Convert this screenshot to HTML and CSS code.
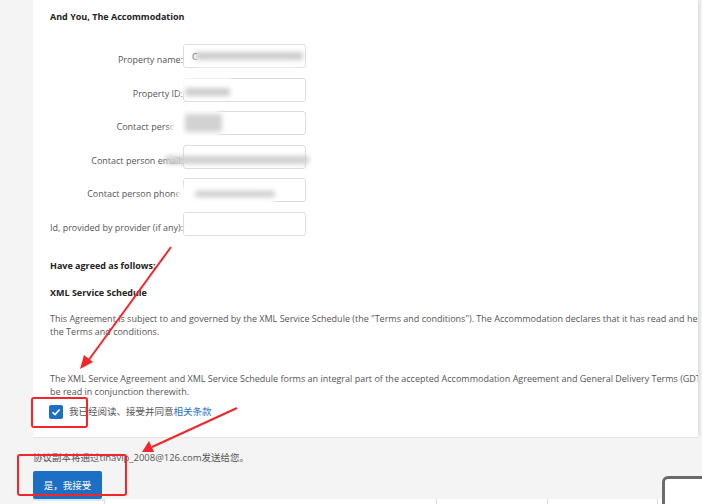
FILE: index.html
```html
<!DOCTYPE html>
<html lang="zh-CN">
<head>
    <meta charset="UTF-8">
    <meta name="viewport" content="width=device-width, initial-scale=1.0">
    <title>XML Service Agreement</title>
    <link rel="stylesheet" href="styles.css">
</head>
<body>
    <div class="page">
        <div class="card">
            <h3 class="title">And You, The Accommodation</h3>

            <div class="form">
                <div class="form-row">
                    <label for="prop_name">Property name:</label>
                    <div class="field">
                        <input type="text" id="prop_name" value="C">
                        <span class="mask m1"></span>
                    </div>
                </div>
                <div class="form-row">
                    <label for="prop_id">Property ID:</label>
                    <div class="field">
                        <input type="text" id="prop_id">
                        <span class="mask m2"></span>
                    </div>
                </div>
                <div class="form-row">
                    <label for="contact">Contact person:</label>
                    <div class="field">
                        <input type="text" id="contact">
                        <span class="mask m3"></span>
                    </div>
                </div>
                <div class="form-row">
                    <label for="contact_email">Contact person email:</label>
                    <div class="field">
                        <input type="text" id="contact_email">
                        <span class="mask m4"></span>
                    </div>
                </div>
                <div class="form-row">
                    <label for="contact_phone">Contact person phone:</label>
                    <div class="field">
                        <input type="text" id="contact_phone">
                        <span class="mask m5"></span>
                    </div>
                </div>
                <div class="form-row">
                    <label for="provider_id">Id, provided by provider (if any):</label>
                    <div class="field">
                        <input type="text" id="provider_id">
                    </div>
                </div>
            </div>

            <h3 class="sub agreed">Have agreed as follows:</h3>
            <h3 class="sub schedule">XML Service Schedule</h3>

            <p class="terms first">This Agreement is subject to and governed by the XML Service Schedule (the "Terms and conditions"). The Accommodation declares that it has read and hereby accepts<br>the Terms and conditions.</p>

            <p class="terms second">The XML Service Agreement and XML Service Schedule forms an integral part of the accepted Accommodation Agreement and General Delivery Terms (GDT") and shall<br>be read in conjunction therewith.</p>

            <label class="agree">
                <span class="checkbox">
                    <svg width="14" height="14" viewBox="0 0 14 14"><polyline points="3.5,7.2 6,9.6 10.6,4.4" fill="none" stroke="#fff" stroke-width="1.5"/></svg>
                </span>
                <span>我已经阅读、接受并同意<a href="#" class="link">相关条款</a></span>
            </label>
        </div>

        <p class="notice">协议副本将通过tinavip_2008@126.com发送给您。</p>
        <button class="accept">是，我接受</button>

        <div class="strip">
            <span class="cell c1"></span>
            <span class="cell c2"></span>
            <span class="cell c3"></span>
            <span class="cell c4"></span>
            <span class="cell c5"></span>
        </div>
    </div>

    <div class="widget"></div>

    <!-- red marks drawn over the screenshot -->
    <svg class="marks" width="702" height="504" viewBox="0 0 702 504">
        <line x1="171" y1="247" x2="88" y2="361" stroke="#f2262b" stroke-width="2"/>
        <polygon points="80,369 84,355 93,362" fill="#f2262b"/>
        <rect x="32" y="398" width="55" height="29" rx="2" fill="none" stroke="#f2262b" stroke-width="2"/>
        <line x1="237" y1="408" x2="152" y2="447" stroke="#f2262b" stroke-width="2"/>
        <polygon points="142,452 149,441 154,452" fill="#f2262b"/>
        <rect x="18" y="455" width="108" height="40" rx="2" fill="none" stroke="#f2262b" stroke-width="2"/>
    </svg>
</body>
</html>
```

FILE: styles.css
```css
body {
    margin: 0;
    width: 702px;
    height: 504px;
    overflow: hidden;
    background: #f4f4f4;
    font-family: "Open Sans", "Noto Sans CJK SC", sans-serif;
    font-size: 9px;
    color: #555;
    position: relative;
}
.page {
    padding-left: 33px;
}
.card {
    width: 648px;
    padding: 10px 0 18px 17px;
    background: #fff;
    overflow: hidden;
    box-shadow: 3px 0 3px -1px #ddd, 0 1px 0 #e6e6e6;
}
.title, .sub {
    margin: 0;
    font-size: 9px;
    line-height: 13px;
    font-weight: 700;
    color: #222;
}
.form {
    margin-top: 21px;
    display: flex;
    flex-direction: column;
    gap: 9.6px;
}
.form-row {
    display: flex;
}
.form-row label {
    width: 133px;
    text-align: right;
    align-self: flex-end;
    line-height: 13px;
    padding-bottom: 2px;
    white-space: nowrap;
}
.field {
    position: relative;
}
.field input {
    display: block;
    box-sizing: border-box;
    width: 123px;
    height: 24px;
    margin: 0;
    padding: 0 8px;
    border: 1px solid #ddd;
    border-radius: 3px;
    font-family: inherit;
    font-size: 9px;
    color: #555;
    background: #fff;
}
.mask {
    position: absolute;
    background: #ccc;
    filter: blur(2.5px);
    border-radius: 2px;
}
.m1 { left: 12px; top: 8px; width: 108px; height: 8px; box-shadow: 0 6px 6px #fff; }
.m2 { left: 2px; top: 10px; width: 45px; height: 8px; box-shadow: -2px -6px 0 4px #fff; }
.m3 { left: 2px; top: 3px; width: 37px; height: 18px; background: #d2d2d2; box-shadow: -8px 0 0 6px #fff; }
.m4 { left: -18px; top: 11px; width: 144px; height: 8px; background: #cfcfcf; }
.m5 { left: 12px; top: 13px; width: 80px; height: 6px; box-shadow: -10px 4px 0 8px #fff; }
.agreed {
    margin-top: 23.5px;
}
.schedule {
    margin-top: 14px;
}
.terms {
    margin: 13px 0 0;
    line-height: 13px;
    white-space: nowrap;
    color: #555;
}
.terms.second {
    margin-top: 34px;
}
.agree {
    margin-top: 7px;
    display: flex;
    align-items: center;
    gap: 6px;
    line-height: 14px;
    font-size: 9.5px;
}
.checkbox {
    width: 14px;
    height: 14px;
    margin-left: -1px;
    background: #1d6fc4;
    border-radius: 2px;
    display: flex;
}
.link {
    color: #2a72c4;
    text-decoration: none;
}
.notice {
    margin: 13.5px 0 0;
    line-height: 13px;
    font-size: 9.5px;
    color: #555;
}
.accept {
    margin-top: 7px;
    display: block;
    width: 69px;
    height: 28px;
    border: none;
    border-radius: 2px;
    background: #1d6fc4;
    color: #fff;
    font-family: inherit;
    font-size: 9.5px;
    cursor: pointer;
}
.strip {
    margin-left: -33px;
    display: flex;
    height: 10px;
    background: #fff;
}
.cell {
    border-right: 1px solid #ddd;
}
.c1 { width: 33px; border: none; background: #f4f4f4; }
.c2 { width: 71px; border-top: 2px solid #dbe6f3; }
.c3 { width: 331px; }
.c4 { width: 110px; }
.c5 { width: 109px; }
.widget {
    position: absolute;
    left: 662px;
    top: 476px;
    width: 60px;
    height: 40px;
    border: 3px solid #6b6b6b;
    border-radius: 6px 0 0 0;
    background: #fff;
    filter: blur(0.5px);
}
.marks {
    position: absolute;
    left: 0;
    top: 0;
    pointer-events: none;
}
```
